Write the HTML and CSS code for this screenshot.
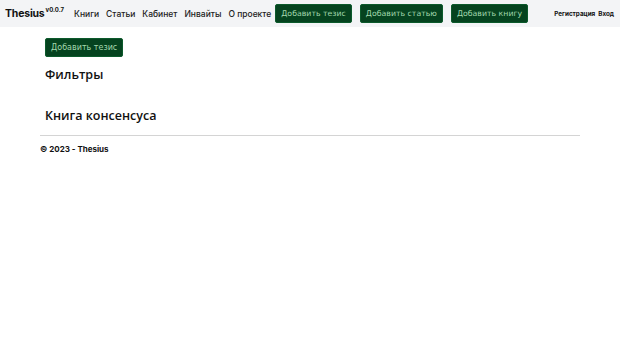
FILE: index.html
```html
<!DOCTYPE html>
<html lang="ru">
<head>
<meta charset="utf-8">
<title>Thesius</title>
<link rel="stylesheet" href="styles.css">
</head>
<body>
<header class="navbar">
  <div class="brand">Thesius<sup class="ver">v0.0.7</sup></div>
  <nav class="links">
    <a href="#">Книги</a>
    <a href="#">Статьи</a>
    <a href="#">Кабинет</a>
    <a href="#">Инвайты</a>
    <a href="#">О проекте</a>
  </nav>
  <div class="actions">
    <button class="btn">Добавить тезис</button>
    <button class="btn">Добавить статью</button>
    <button class="btn">Добавить книгу</button>
  </div>
  <div class="auth">
    <a href="#">Регистрация</a>
    <a href="#">Вход</a>
  </div>
</header>
<main class="main">
  <div class="content">
    <button class="btn">Добавить тезис</button>
    <h2 class="heading filters">Фильтры</h2>
    <h2 class="heading book">Книга консенсуса</h2>
  </div>
  <hr class="sep">
  <footer class="footer">© 2023 - Thesius</footer>
</main>
</body>
</html>
```
FILE: styles.css
```css
* { box-sizing: border-box; }
html, body { margin: 0; padding: 0; background: #ffffff; }
body { font-family: "DejaVu Sans", sans-serif; color: #111111; }

.navbar {
  display: flex;
  align-items: center;
  height: 27px;
  background: #f3f4f6;
  padding: 0 6px 0 5px;
  white-space: nowrap;
}
.brand {
  font-family: Inter, sans-serif;
  font-weight: 700;
  font-size: 10.5px;
  letter-spacing: -0.2px;
  color: #111;
  line-height: 1;
  flex-shrink: 0;
}
.ver { font-size: 6px; font-weight: 700; vertical-align: 5px; margin-left: 1px; letter-spacing: 0; }
.links { display: flex; gap: 7px; margin-left: 10px; flex-shrink: 0; }
.links a {
  font-family: Inter, sans-serif;
  font-size: 8.5px;
  font-weight: 500;
  color: #222;
  text-decoration: none;
}
.actions { display: flex; gap: 8px; margin-left: 4px; flex-shrink: 0; }
.btn {
  font-family: "DejaVu Sans", sans-serif;
  font-size: 7.8px;
  color: #a3d8ae;
  background: #05431f;
  border: 1px solid #0c5a2c;
  border-radius: 2px;
  height: 19px;
  padding: 0 5px;
  white-space: nowrap;
  cursor: pointer;
}
.auth { margin-left: auto; display: flex; gap: 3px; flex-shrink: 0; }
.auth a {
  font-family: Inter, sans-serif;
  font-size: 6.3px;
  font-weight: 700;
  color: #111;
  text-decoration: none;
}

.main { padding: 0 40px; }
.content { padding: 11px 5px 0; }
.content .btn { display: block; font-size: 8px; }
.heading {
  font-family: "Open Sans", sans-serif;
  font-size: 12.5px;
  font-weight: 600;
  margin: 0;
  line-height: 16px;
}
.filters { margin-top: 10px; }
.book { margin-top: 25px; }
.sep {
  border: 0;
  border-top: 1px solid #d4d4d4;
  margin: 11px 0 0;
}
.footer {
  font-family: Inter, sans-serif;
  font-size: 8px;
  font-weight: 700;
  padding-top: 8px;
}
```
